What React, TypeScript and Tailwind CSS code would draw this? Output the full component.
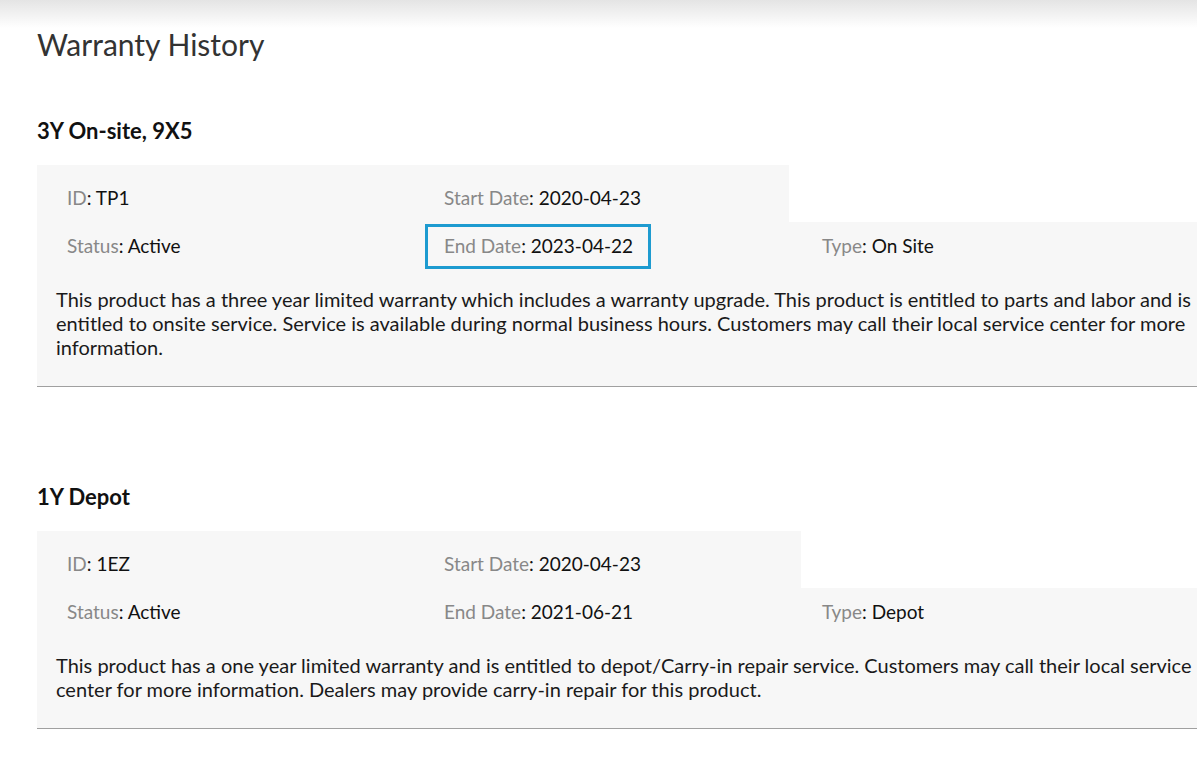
const warranties = [
  {
    name: "3Y On-site, 9X5",
    id: "TP1",
    start: "2020-04-23",
    end: "2023-04-22",
    status: "Active",
    type: "On Site",
    highlight: true,
    topWidth: "w-[752px]",
    desc: "This product has a three year limited warranty which includes a warranty upgrade. This product is entitled to parts and labor and is entitled to onsite service. Service is available during normal business hours. Customers may call their local service center for more information.",
  },
  {
    name: "1Y Depot",
    id: "1EZ",
    start: "2020-04-23",
    end: "2021-06-21",
    status: "Active",
    type: "Depot",
    highlight: false,
    topWidth: "w-[764px]",
    desc: "This product has a one year limited warranty and is entitled to depot/Carry-in repair service. Customers may call their local service center for more information. Dealers may provide carry-in repair for this product.",
  },
];

function Field({ label, value }: { label: string; value: string }) {
  return (
    <span>
      <span className="text-[#888]">{label}</span>
      <span className="text-[#111]">: {value}</span>
    </span>
  );
}

export default function App() {
  return (
    <div className="min-h-screen bg-[linear-gradient(to_bottom,#e4e4e4,#ffffff_28px)] font-['Lato',sans-serif] text-[#222] overflow-hidden">
      <div className="pl-[37px] pt-[25px]">
        <h1 className="text-[30px] leading-[38px] text-[#333]">Warranty History</h1>

        {warranties.map((w, i) => (
          <section key={w.id} className={i === 0 ? "mt-[54px]" : "mt-[96px]"}>
            <h2 className="text-[22px] leading-[28px] font-bold text-[#111] mb-[20px]">{w.name}</h2>

            <div className="text-[19px] leading-[24px] border-b border-[#a0a0a0]">
              {/* first row sits in a narrower block */}
              <div className={`${w.topWidth} bg-[#f7f7f7] pl-[30px] pt-[21px] pb-[12px] flex`}>
                <div className="w-[377px]">
                  <Field label="ID" value={w.id} />
                </div>
                <div>
                  <Field label="Start Date" value={w.start} />
                </div>
              </div>

              <div className="bg-[#f7f7f7]">
                <div className="pl-[30px] pt-[12px] pb-[12px] flex">
                  <div className="w-[377px]">
                    <Field label="Status" value={w.status} />
                  </div>
                  <div className="w-[378px] relative">
                    {w.highlight && (
                      <span className="absolute -left-[19px] -top-[10px] w-[226px] h-[45px] border-[3px] border-[#1e9bd0]" />
                    )}
                    <Field label="End Date" value={w.end} />
                  </div>
                  <div>
                    <Field label="Type" value={w.type} />
                  </div>
                </div>
                <p className="pl-[19px] pr-[4px] pt-[17px] pb-[27px] text-[20px] text-[#1a1a1a]">{w.desc}</p>
              </div>
            </div>
          </section>
        ))}
      </div>
    </div>
  );
}
